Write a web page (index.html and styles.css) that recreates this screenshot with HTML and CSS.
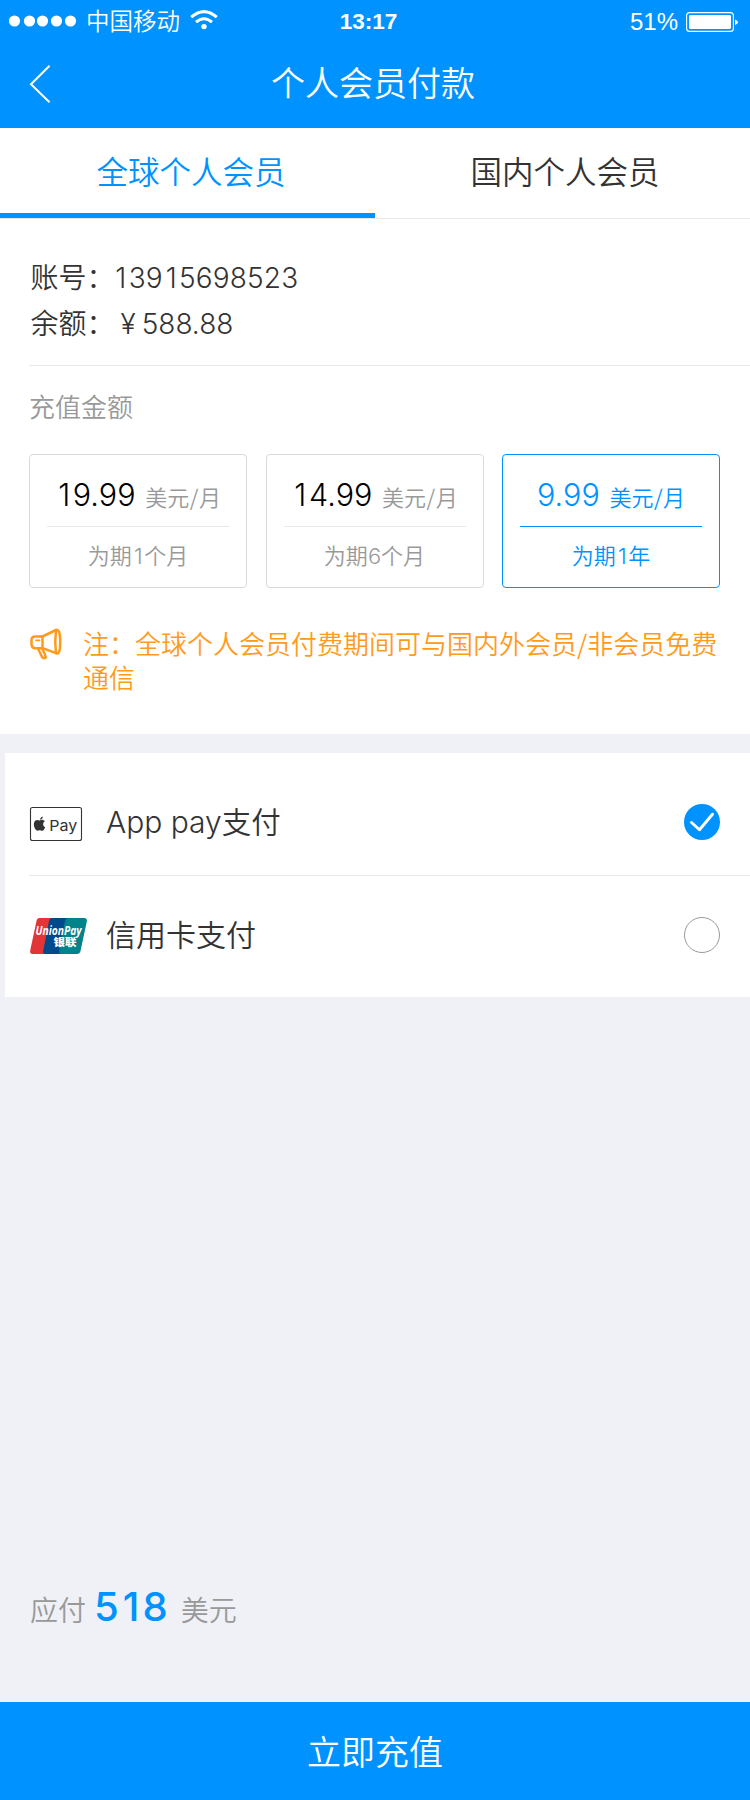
FILE: index.html
```html
<!DOCTYPE html>
<html lang="zh-CN">
<head>
<meta charset="utf-8">
<title>个人会员付款</title>
<link rel="stylesheet" href="styles.css">
</head>
<body>
<div class="page">
  <header class="header">
    <div class="status">
      <div class="status-left">
        <svg class="signal" width="68" height="12" viewBox="0 0 68 12" fill="#fff"><circle cx="5.5" cy="6" r="5.6"/><circle cx="20.5" cy="6" r="5.6"/><circle cx="33.5" cy="6" r="5.6"/><circle cx="47.5" cy="6" r="5.6"/><circle cx="61.5" cy="6" r="5.6"/></svg>
        <span class="carrier">中国移动</span>
        <svg class="wifi" width="28" height="20" viewBox="0 0 28 20" fill="none" stroke="#fff" stroke-width="3"><path d="M1.2 7.2Q14-4 26.8 7.2"/><path d="M6 12.2Q14 5.2 22 12.2"/><circle cx="14" cy="16.6" r="2.7" fill="#fff" stroke="none"/></svg>
      </div>
      <span class="clock">13:17</span>
      <div class="status-right">
        <span class="percent">51%</span>
        <svg class="battery" width="52" height="20" viewBox="0 0 52 20"><rect x=".6" y=".6" width="46.8" height="18.8" rx="3" fill="none" stroke="#fff" stroke-width="1.1"/><rect x="3" y="3" width="42" height="14" rx="1.4" fill="#fff"/><path d="M49 7.5Q52 8.5 52 10.200T49 13Z" fill="#fff"/></svg>
      </div>
    </div>
    <nav class="nav">
      <svg class="back" width="22" height="38" viewBox="0 0 22 38" fill="none" stroke="#fff" stroke-width="2"><path d="M20.500 .8 2 19.200 20.500 37.200"/></svg>
      <h1 class="title">个人会员付款</h1>
    </nav>
  </header>

  <div class="tabs">
    <div class="tab tab-active">全球个人会员</div>
    <div class="tab">国内个人会员</div>
  </div>

  <section class="account">
    <div class="account-row"><span>账号：</span><span class="account-number"><span class="one">1</span>39<span class="one">1</span>5698523</span></div>
    <div class="account-row"><span>余额：</span><span class="yen">¥</span><span class="balance">588.88</span></div>
  </section>

  <section class="recharge">
    <h2 class="recharge-title">充值金额</h2>
    <div class="plans">
      <div class="plan">
        <div class="plan-price"><span class="amount"><span class="one">1</span>9.99</span><span class="unit">美元<i class="slash">/</i>月</span></div>
        <div class="plan-term">为期<span class="term-number one">1</span>个月</div>
      </div>
      <div class="plan">
        <div class="plan-price"><span class="amount"><span class="one">1</span>4.99</span><span class="unit">美元<i class="slash">/</i>月</span></div>
        <div class="plan-term">为期<span class="term-number">6</span>个月</div>
      </div>
      <div class="plan plan-active">
        <div class="plan-price"><span class="amount">9.99</span><span class="unit">美元<i class="slash">/</i>月</span></div>
        <div class="plan-term">为期<span class="term-number one">1</span>年</div>
      </div>
    </div>
    <div class="note">
      <svg class="horn" width="32" height="32" viewBox="0 0 32 32" fill="none" stroke="#ff9b1c" stroke-width="2.500" stroke-linejoin="round" stroke-linecap="round"><path d="M12.500 8.500H5Q1.500 8.500 1.500 12V16.500Q2 20.200 5 20.200H12.500Z"/><path d="M6 12.300H9.500" stroke-width="1.800"/><path d="M12.500 8.500 26 2Q30.200 .5 30.200 14T26 25.200L12.500 20.200"/><path d="M26 2Q24.500 14 26 25.200"/><path d="M8 20.500 12 29Q13.500 31 15.800 29.500L14.800 26 12 20.500"/></svg>
      <p class="note-text">注：全球个人会员付费期间可与国内外会员<i class="slash">/</i>非会员免费<br>通信</p>
    </div>
  </section>

  <section class="methods">
    <div class="method">
      <svg class="logo" width="60" height="36" viewBox="0 0 60 36"><rect x="1.500" y="1.500" width="51" height="33" rx="2" fill="#fff" stroke="#333" stroke-width="1.100"/><path d="M11.200 13.700Q11.100 11.200 13.900 10.500 13.900 13 11.200 13.700ZM10.600 14.600Q12.500 13.500 14 14Q15.300 14.400 15.800 15.200Q14 16.300 14.100 18.400Q14.200 20.300 16.200 21.300Q15 24.600 13.500 24.700Q12.400 24.700 11.300 24.200Q10.300 24 9 24.600Q6.500 25.300 5.100 20.300Q4.300 16 6.500 14.500Q8.200 13.400 10.600 14.600Z" fill="#333"/><text class="logo-pay" x="20.200" y="25" textLength="28" lengthAdjust="spacingAndGlyphs">Pay</text></svg>
      <span class="method-name">App pay<span class="cjk">支付</span></span>
      <svg class="radio" width="36" height="36" viewBox="0 0 36 36"><circle cx="18" cy="18" r="18" fill="#0093ff"/><path d="M7.500 18.500 15.500 25.800 28.500 10.200" fill="none" stroke="#fff" stroke-width="2.900" stroke-linecap="round" stroke-linejoin="round"/></svg>
    </div>
    <div class="method">
      <svg class="logo" width="60" height="36" viewBox="0 0 60 36"><path d="M10.500 0H27L20 36H4Q.5 36 1.200 32.500L7.500 3Q8 0 10.500 0Z" fill="#e13537"/><path d="M23.500 0H42L35 36H17Q13.500 36 14.200 33L20 3Q20.800 0 23.500 0Z" fill="#00498a"/><path d="M39.500 0H55Q58.500 0 57.800 3.500L51.500 33Q50.800 36 48 36H33Q29.500 36 30.200 33L36 3Q36.800 0 39.500 0Z" fill="#00838b"/><text class="logo-union" x="6.500" y="17.300" textLength="46" lengthAdjust="spacingAndGlyphs">UnionPay</text><text class="logo-yinlian" x="24.500" y="27.500" textLength="23" lengthAdjust="spacingAndGlyphs">银联</text></svg>
      <span class="method-name">信用卡支付</span>
      <svg class="radio" width="36" height="36" viewBox="0 0 36 36"><circle cx="18" cy="18" r="17.500" fill="#fff" stroke="#999"/></svg>
    </div>
  </section>

  <footer class="footer">
    <div class="total"><span>应付</span><strong class="total-number">5<span class="one">1</span>8</strong><span>美元</span></div>
    <button class="submit">立即充值</button>
  </footer>
</div>
</body>
</html>
```
FILE: styles.css
```css
* { box-sizing: border-box; margin: 0; padding: 0; }
body {
  background: #eff1f6;
  color: #333;
  font-family: "Noto Sans CJK SC", sans-serif;
  font-weight: 350;
}
svg { display: block; flex: none; }
.page { width: 750px; height: 1800px; display: flex; flex-direction: column; }

/* widens the narrow figure one to the advance of the other digits */
.one { padding: 0 .08em 0 .1em; }

.header { height: 128px; background: #0093ff; color: #fff; }
.status {
  height: 42px;
  display: grid;
  grid-template-columns: 1fr auto 1fr;
  align-items: center;
  padding: 0 12px 0 9px;
}
.status-left { display: flex; align-items: center; }
.carrier { font-size: 23.5px; line-height: 40px; margin: -3px 0 0 9px; }
.wifi { margin: -2px 0 0 10px; }
.clock { margin-left: -10px; padding-top: 1px; font-family: "Liberation Sans", sans-serif; font-weight: 700; font-size: 22.500px; }
.status-right { display: flex; align-items: center; justify-content: flex-end; gap: 8px; }
.percent { padding-top: 1px; font-family: "Liberation Sans", sans-serif; font-size: 24px; }
.battery { margin-top: 2px; }
.nav {
  height: 86px;
  display: grid;
  grid-template-columns: 100px 1fr 100px;
  align-items: center;
  padding-left: 27px;
  padding-right: 31px;
}
.back { margin: -3px 0 0 1.500px; }
.title { font-size: 34px; font-weight: 350; line-height: 80px; text-align: center; margin-top: -6px; }

.tabs { height: 91px; display: flex; background: #fff; border-bottom: 1px solid #e9e9e9; }
.tab { flex: none; width: 50%; height: 90px; padding-left: 5px; font-size: 31.500px; line-height: 84px; text-align: center; }
.tab-active { padding-left: 7px; color: #0093ff; border-bottom: 5px solid #0093ff; }

.account { height: 146px; background: #fff; padding: 34px 0 0 30.500px; }
.account-row { display: flex; align-items: baseline; height: 46px; line-height: 46px; font-size: 28px; }
.account-number, .yen, .balance { font-family: Inter, sans-serif; font-size: 28px; font-weight: 300; }
.account-number { margin-left: -2px; letter-spacing: .15px; }
.yen { margin: 0 6px; }

.recharge { height: 369px; background: #fff; padding: 0 30px 0 29px; }
.recharge-title {
  height: 89px;
  margin-right: -30px;
  border-top: 1px solid #e9e9e9;
  color: #999;
  font-size: 26px;
  font-weight: 350;
  line-height: 79px;
}
.plans { display: flex; justify-content: space-between; }
.plan {
  width: 218px;
  height: 134px;
  padding: 0 17px;
  border: 1px solid #d9d9d9;
  border-radius: 4px;
  color: #999;
  text-align: center;
}
.plan-price {
  display: flex;
  justify-content: center;
  align-items: baseline;
  gap: 9.500px;
  height: 72px;
  border-bottom: 1px solid #e9e9e9;
  line-height: 80px;
  white-space: nowrap;
}
.amount { font-family: Inter, sans-serif; font-size: 30.500px; font-weight: 300; letter-spacing: .1px; color: #000; }
.unit { font-size: 22px; }
.slash { font-style: normal; }
.unit .slash { margin: 0 .5px; }
.plan-term { font-size: 22px; line-height: 55px; }
.term-number { font-family: Inter, sans-serif; font-weight: 300; }
.plan-active, .plan-active .amount { color: #0093ff; border-color: #0093ff; }
.plan-active .plan-price { border-color: #0093ff; }
.note { display: flex; margin-top: 38px; color: #ff9b1c; }
.horn { margin: 2px -1px 0 1px; }
.note-text { margin-left: 22px; font-size: 26px; line-height: 34px; white-space: nowrap; }

.methods { height: 244px; margin: 19px 0 0 5px; padding-left: 24px; background: #fff; }
.method { display: flex; align-items: center; height: 122px; padding: 16px 30px 0 0; }
.method + .method { border-top: 1px solid #e9e9e9; padding: 0 30px 3px 0; }
.logo { margin-top: 3px; }
.method + .method .logo { margin-top: 2px; }
.method-name { flex: 1; margin-left: 17px; font-size: 30px; line-height: 44px; font-family: Inter, "Noto Sans CJK SC", sans-serif; }
.method-name .cjk { font-size: 29.5px; }
.logo-pay { font: 400 15px Inter, sans-serif; fill: #333; }
.logo-union { font: italic 700 11.500px "Open Sans", sans-serif; fill: #fff; }
.logo-yinlian { font: 900 10.500px "Noto Sans CJK SC", sans-serif; fill: #fff; }

.footer { margin-top: auto; }
.total { display: flex; align-items: baseline; padding-left: 30px; height: 135px; font-size: 28px; line-height: 80px; color: #999; }
.total-number { margin: 0 13px 0 8px; font-family: Inter, sans-serif; font-weight: 450; font-size: 40px; color: #0093ff; }
.submit {
  display: block;
  width: 100%;
  height: 98px;
  padding-bottom: 2px;
  border: 0;
  background: #0093ff;
  color: #fff;
  font-family: "Noto Sans CJK SC", sans-serif;
  font-size: 34px;
  font-weight: 350;
}
```
